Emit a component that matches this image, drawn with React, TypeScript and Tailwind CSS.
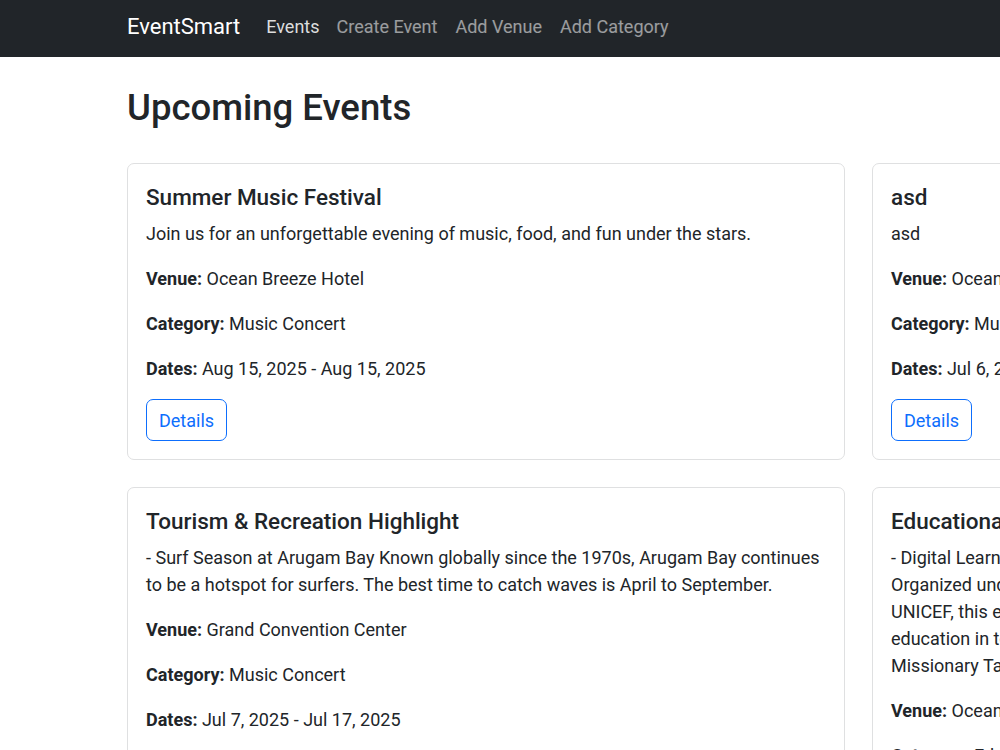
type EventItem = {
  title: string
  lines: string[]
  venue: string
  category: string
  dates: string
}

const EVENTS: EventItem[] = [
  {
    title: "Summer Music Festival",
    lines: ["Join us for an unforgettable evening of music, food, and fun under the stars."],
    venue: "Ocean Breeze Hotel",
    category: "Music Concert",
    dates: "Aug 15, 2025 - Aug 15, 2025",
  },
  {
    title: "asd",
    lines: ["asd"],
    venue: "Ocean Breeze Hotel",
    category: "Music Concert",
    dates: "Jul 6, 2025 - Jul 6, 2025",
  },
  {
    title: "Tourism & Recreation Highlight",
    lines: [
      "- Surf Season at Arugam Bay Known globally since the 1970s, Arugam Bay continues to be a hotspot for surfers. The best time to catch waves is April to September.",
    ],
    venue: "Grand Convention Center",
    category: "Music Concert",
    dates: "Jul 7, 2025 - Jul 17, 2025",
  },
  {
    title: "Educational Outreach Program",
    lines: [
      "- Digital Learning Week for Rural Schools in the Eastern Province",
      "Organized under the Ministry of Education with the support of",
      "UNICEF, this event brings laptops, tablets and internet-based",
      "education in to schools run by the Methodist and Jesuit",
      "Missionary Tamil communities across the region.",
    ],
    venue: "Ocean Breeze Hotel",
    category: "Education",
    dates: "Jul 20, 2025 - Jul 24, 2025",
  },
]

function EventCard({ ev }: { ev: EventItem }) {
  return (
    <div className="bg-white border border-[#dfe0e1] rounded-[7px] px-[18px] pt-[20px] pb-[18px]">
      <h5 className="text-[22.5px] leading-[27px] font-medium mb-[9px]">{ev.title}</h5>
      <p className="mb-[18px]">
        {ev.lines.map((l) => (
          <span key={l} className="block">{l}</span>
        ))}
      </p>
      <p className="mb-[18px]">
        <strong className="font-bold">Venue:</strong> {ev.venue}
      </p>
      <p className="mb-[18px]">
        <strong className="font-bold">Category:</strong> {ev.category}
      </p>
      <p className="mb-[17px]">
        <strong className="font-bold">Dates:</strong> {ev.dates}
      </p>
      <button className="border border-[#0d6efd] text-[#0d6efd] rounded-[7px] px-[12px] py-[6.5px] leading-[27px] text-[18px] hover:bg-[#0d6efd] hover:text-white">
        Details
      </button>
    </div>
  )
}

export default function App() {
  return (
    <div className="h-[750px] w-full overflow-hidden bg-white text-[#212529] text-[18px] leading-[27px] font-['Roboto',sans-serif]">
      {/* Navbar */}
      <nav className="h-[57px] bg-[#212529] flex items-center pb-1 pl-[127px] whitespace-nowrap">
        <span className="text-white text-[22px] mr-[17px]">EventSmart</span>
        <a className="pl-[9px] pr-[8px] text-[#dcdddd]">Events</a>
        <a className="px-[9px] text-white/55">Create Event</a>
        <a className="px-[9px] text-white/55">Add Venue</a>
        <a className="px-[9px] text-white/55">Add Category</a>
      </nav>

      <div className="pl-[127px] pt-[29px]">
        <h1 className="text-[36.5px] leading-[44px] font-medium mb-[33px]">Upcoming Events</h1>
        <div className="grid grid-cols-[718px_718px] gap-[27px] w-max">
          {EVENTS.map((ev) => (
            <EventCard key={ev.title} ev={ev} />
          ))}
        </div>
      </div>
    </div>
  )
}
